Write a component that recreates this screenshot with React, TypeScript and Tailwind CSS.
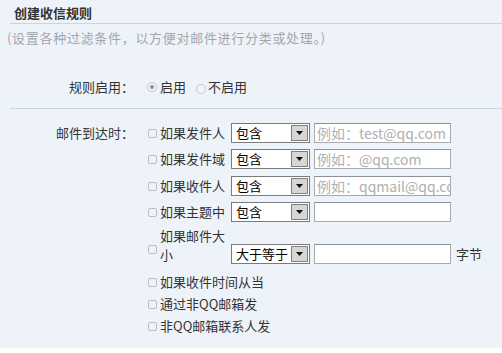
import React from "react";

const font = { fontFamily: '"Noto Sans CJK SC", "Liberation Sans", sans-serif' };

function Checkbox() {
  return <span className="inline-block w-[9px] h-[9px] shrink-0 rounded-[2px] border border-[#b9bec6] bg-[#f1f2f4]" />;
}

function Radio({ checked }: { checked?: boolean }) {
  return (
    <span className="inline-flex items-center justify-center w-[10px] h-[10px] shrink-0 rounded-full border border-[#c3c7cd] bg-[#f3f4f6]">
      {checked && <span className="w-[4px] h-[4px] rounded-full bg-[#8a8f96]" />}
    </span>
  );
}

function Select({ value }: { value: string }) {
  return (
    <div className="flex items-center w-[79px] h-[20px] border border-[#7b7b7b] bg-white">
      <span className="flex-1 pl-[4px] text-[13px] leading-[18px] text-black whitespace-nowrap overflow-hidden">{value}</span>
      <span className="flex items-center justify-center w-[17px] h-[16px] mr-[1px] border border-[#7f7f7f] bg-[#d6d6d6]">
        <svg width="7" height="4" viewBox="0 0 7 4"><path d="M0 0H7L3.5 4Z" fill="#111" /></svg>
      </span>
    </div>
  );
}

function Input({ placeholder }: { placeholder?: string }) {
  return (
    <div className="ml-[4px] w-[137px] h-[20px] border border-[#a6abb2] border-t-[#8d9299] bg-white overflow-hidden">
      <span className="block pl-[2px] text-[14px] leading-[18px] text-[#b0b0b0] whitespace-nowrap">{placeholder}</span>
    </div>
  );
}

function CondRow({ label, placeholder, mt }: { label: string; placeholder?: string; mt: string }) {
  return (
    <div className={`flex items-center h-[20px] ${mt}`}>
      <Checkbox />
      <span className="ml-[3px] w-[71px] text-[13px] leading-[20px] text-[#333] whitespace-nowrap">{label}</span>
      <Select value="包含" />
      <Input placeholder={placeholder} />
    </div>
  );
}

export default function App() {
  return (
    <div className="w-[502px] h-[353px] bg-white overflow-hidden" style={font}>
      <div className="h-[348px] bg-[#eef3fa] pt-[3px]">
        <div className="pl-[14px] h-[19px] text-[13px] leading-[19px] font-bold text-[#333]">创建收信规则</div>
        <div className="ml-[10px] mt-[1px] border-t border-[#cad5e3]" />
        <div className="pl-[7px] mt-[4px] h-[20px] text-[13px] leading-[20px] tracking-[0.7px] text-[#a3a6ab] whitespace-nowrap">
          (设置各种过滤条件，以方便对邮件进行分类或处理。)
        </div>

        <div className="flex items-center mt-[29px] h-[20px]">
          <span className="w-[134px] text-right text-[13px] leading-[20px] text-[#333]">规则启用：</span>
          <div className="ml-[13px] flex items-center">
            <Radio checked />
            <span className="ml-[3px] text-[13px] leading-[20px] text-[#333]">启用</span>
            <span className="ml-[10px]"><Radio /></span>
            <span className="ml-[2px] text-[13px] leading-[20px] text-[#333]">不启用</span>
          </div>
        </div>

        <div className="ml-[10px] mt-[11px] border-t border-[#cad5e3]" />

        <div className="flex mt-[14px]">
          <span className="w-[134px] h-[20px] text-right text-[13px] leading-[20px] text-[#333]">邮件到达时：</span>
          <div className="ml-[14px] flex flex-col">
            <CondRow label="如果发件人" placeholder="例如：test@qq.com" mt="" />
            <CondRow label="如果发件域" placeholder="例如：@qq.com" mt="mt-[6px]" />
            <CondRow label="如果收件人" placeholder="例如：qqmail@qq.com" mt="mt-[7px]" />
            <CondRow label="如果主题中" mt="mt-[6px]" />

            <div className="flex items-end mt-[4px]">
              <span className="mb-[5px]"><Checkbox /></span>
              <span className="ml-[3px] w-[71px] pr-[5px] text-[13px] leading-[19px] text-[#333]">如果邮件大小</span>
              <Select value="大于等于" />
              <Input />
              <span className="ml-[5px] h-[20px] text-[13px] leading-[20px] text-[#333]">字节</span>
            </div>

            <div className="flex items-center h-[20px] mt-[8px]">
              <Checkbox />
              <span className="ml-[3px] text-[13px] leading-[20px] text-[#333] whitespace-nowrap">如果收件时间从当</span>
            </div>
            <div className="flex items-center h-[20px] mt-[2px]">
              <Checkbox />
              <span className="ml-[3px] text-[13px] leading-[20px] text-[#333] whitespace-nowrap">通过非QQ邮箱发</span>
            </div>
            <div className="flex items-center h-[20px] mt-[2px]">
              <Checkbox />
              <span className="ml-[3px] text-[13px] leading-[20px] text-[#333] whitespace-nowrap">非QQ邮箱联系人发</span>
            </div>
          </div>
        </div>
      </div>
    </div>
  );
}
